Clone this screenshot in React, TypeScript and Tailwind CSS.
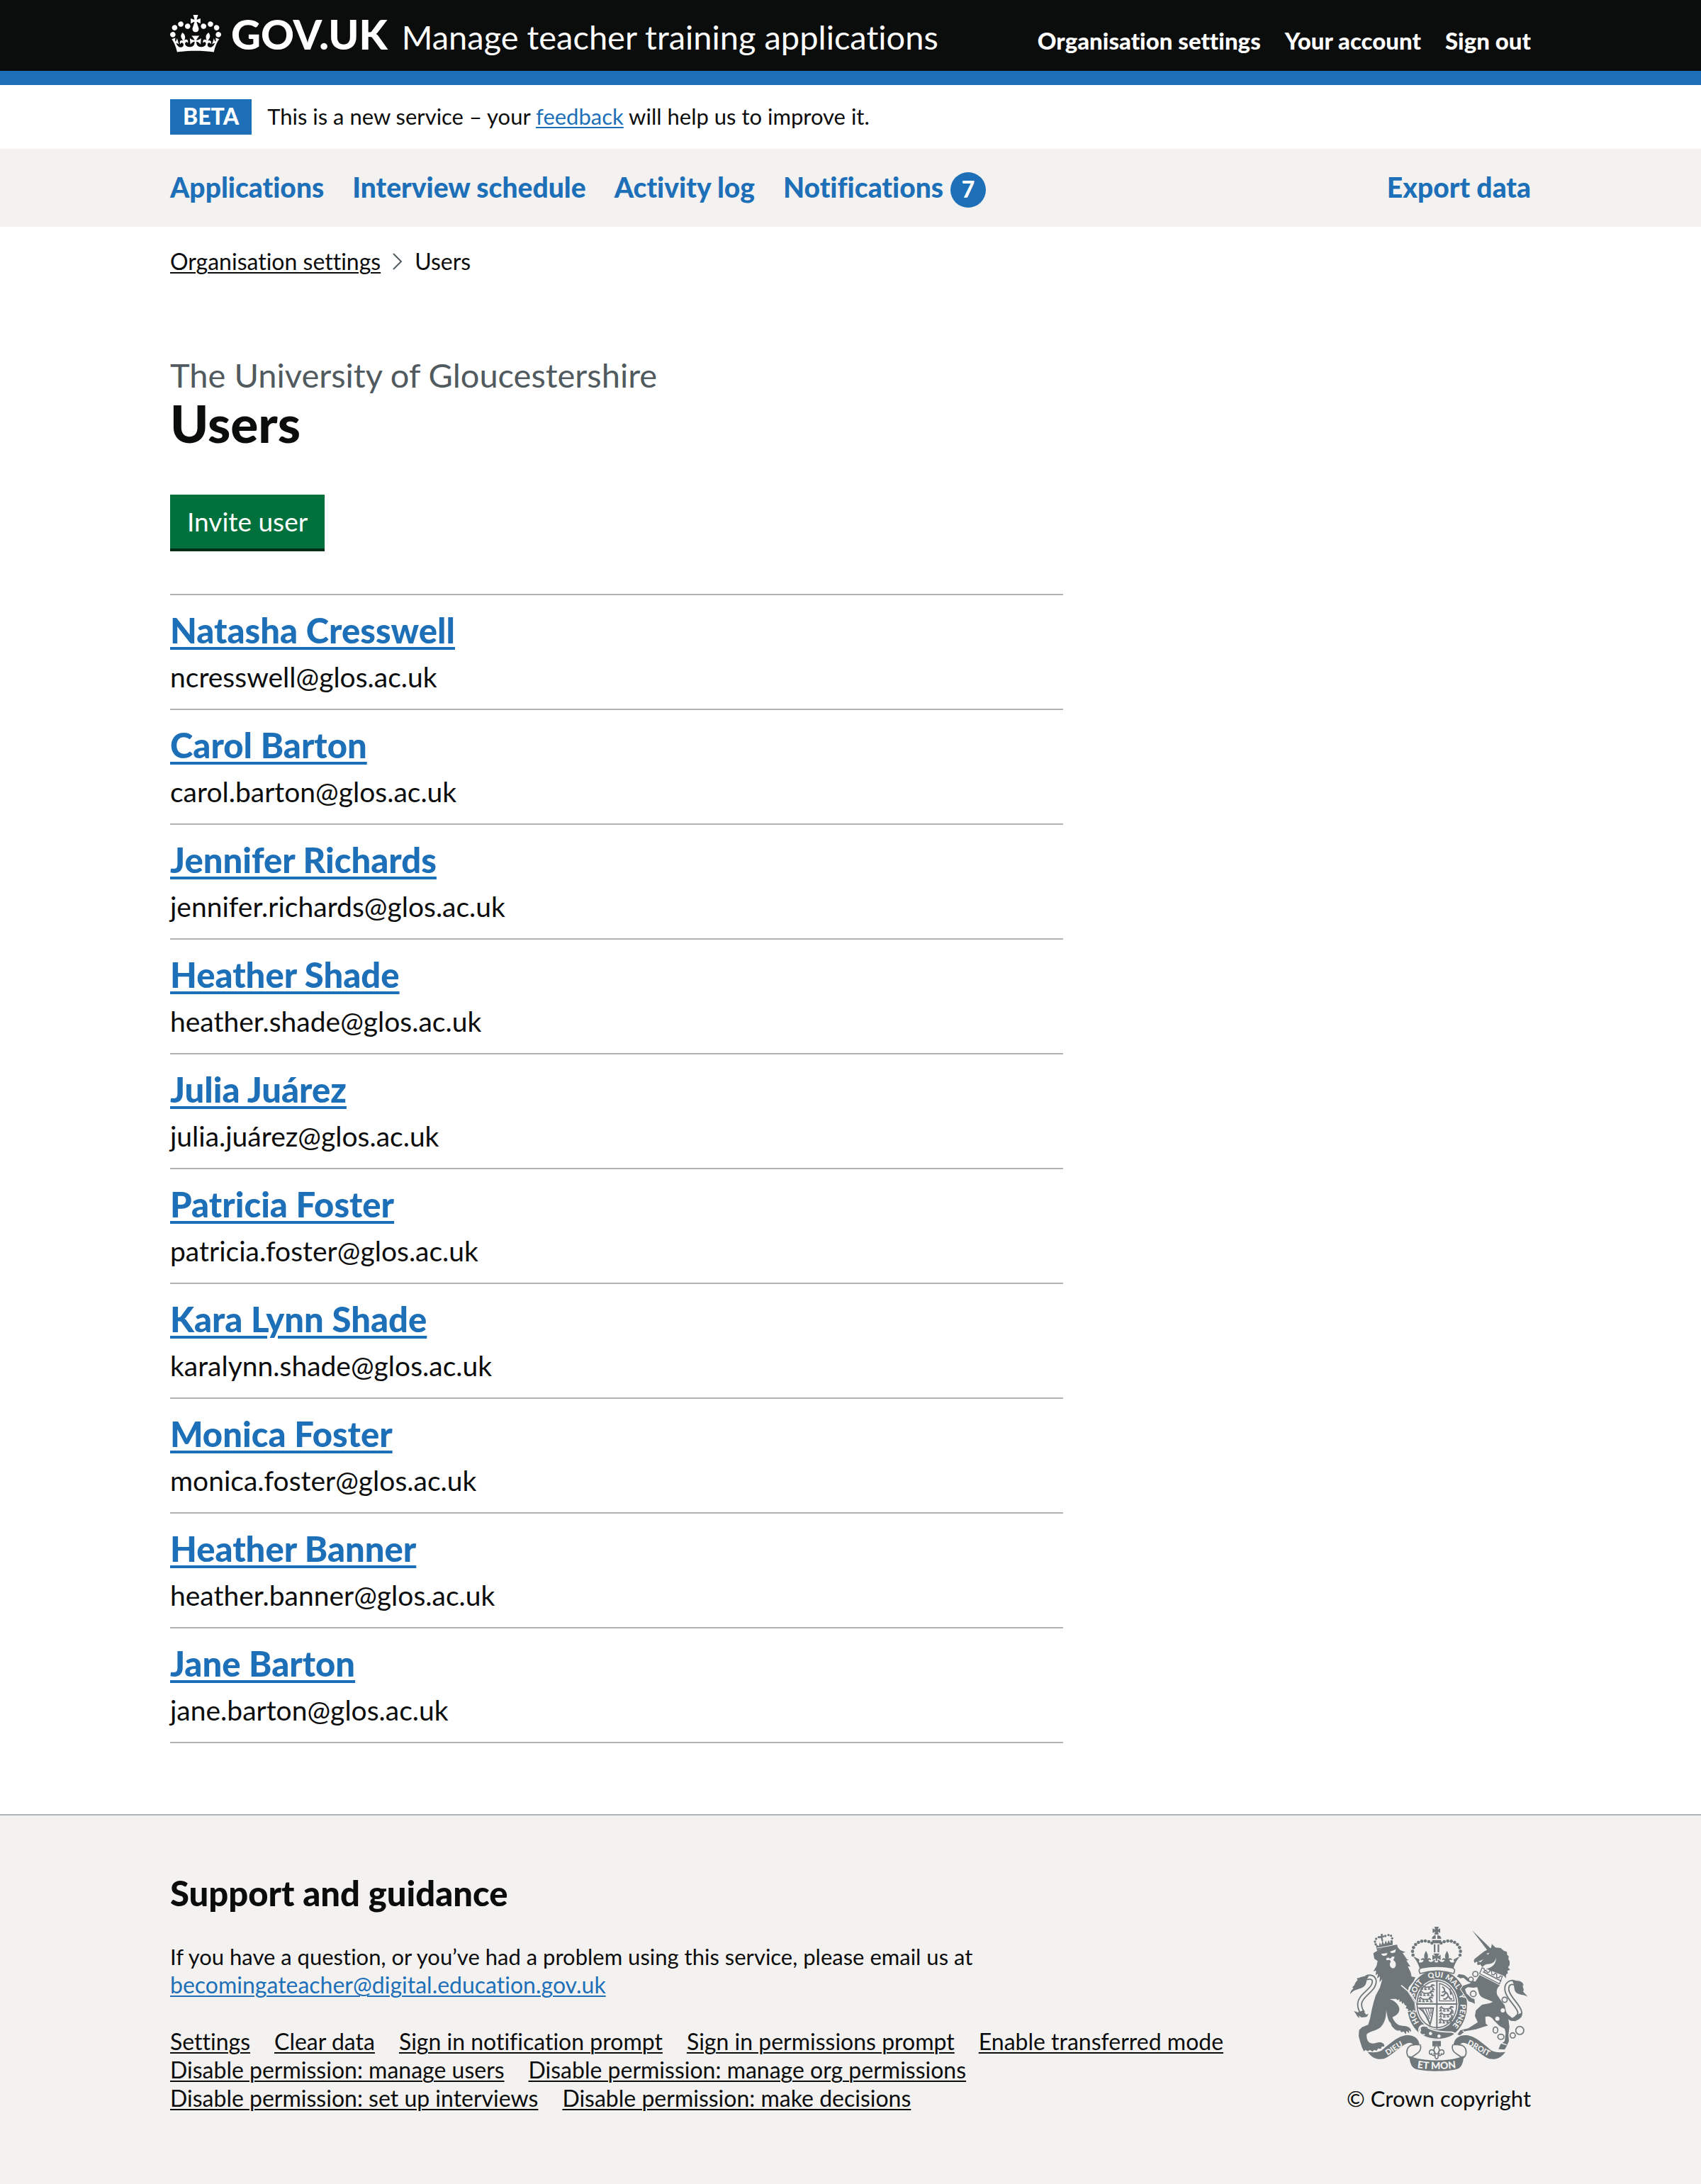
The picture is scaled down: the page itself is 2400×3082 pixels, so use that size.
import type { ReactNode } from 'react';

const users = [
  { name: 'Natasha Cresswell', email: 'ncresswell@glos.ac.uk' },
  { name: 'Carol Barton', email: 'carol.barton@glos.ac.uk' },
  { name: 'Jennifer Richards', email: 'jennifer.richards@glos.ac.uk' },
  { name: 'Heather Shade', email: 'heather.shade@glos.ac.uk' },
  { name: 'Julia Juárez', email: 'julia.juárez@glos.ac.uk' },
  { name: 'Patricia Foster', email: 'patricia.foster@glos.ac.uk' },
  { name: 'Kara Lynn Shade', email: 'karalynn.shade@glos.ac.uk' },
  { name: 'Monica Foster', email: 'monica.foster@glos.ac.uk' },
  { name: 'Heather Banner', email: 'heather.banner@glos.ac.uk' },
  { name: 'Jane Barton', email: 'jane.barton@glos.ac.uk' },
];

const accountLinks = ['Organisation settings', 'Your account', 'Sign out'];

const footerLinks = [
  'Settings',
  'Clear data',
  'Sign in notification prompt',
  'Sign in permissions prompt',
  'Enable transferred mode',
  'Disable permission: manage users',
  'Disable permission: manage org permissions',
  'Disable permission: set up interviews',
  'Disable permission: make decisions',
];

function Container({ className = '', children }: { className?: string; children: ReactNode }) {
  return <div className={`mx-auto w-full max-w-[1920px] ${className}`}>{children}</div>;
}

function CrownIcon() {
  return (
    <svg
      aria-hidden="true"
      className="mr-3.5 inline-block h-[53px] w-[72px] align-[-4px]"
      viewBox="0 0 132 97"
      fill="currentColor"
      fillRule="evenodd"
    >
      <path d="M25 30.2c3.5 1.5 7.7-.2 9.1-3.7 1.5-3.6-.2-7.8-3.9-9.2-3.6-1.4-7.6.3-9.1 3.9-1.4 3.5.3 7.5 3.9 9zM9 39.5c3.6 1.5 7.8-.2 9.2-3.7 1.5-3.6-.2-7.8-3.9-9.1-3.6-1.5-7.6.2-9.1 3.8-1.4 3.5.3 7.5 3.8 9zM4.4 57.2c3.5 1.5 7.7-.2 9.1-3.8 1.5-3.6-.2-7.7-3.9-9.1-3.5-1.5-7.6.3-9.1 3.8-1.4 3.5.3 7.6 3.9 9.1zm38.3-21.4c3.5 1.5 7.7-.2 9.1-3.8 1.5-3.6-.2-7.7-3.9-9.1-3.6-1.5-7.6.3-9.1 3.8-1.3 3.6.4 7.7 3.9 9.1zm64.4-5.6c-3.6 1.5-7.8-.2-9.1-3.7-1.5-3.6.2-7.8 3.8-9.2 3.6-1.4 7.7.3 9.2 3.9 1.3 3.5-.4 7.5-3.9 9zm15.9 9.3c-3.6 1.5-7.7-.2-9.1-3.7-1.5-3.6.2-7.8 3.7-9.1 3.6-1.5 7.7.2 9.2 3.8 1.5 3.5-.3 7.5-3.8 9zm4.7 17.7c-3.6 1.5-7.8-.2-9.2-3.8-1.5-3.6.2-7.7 3.9-9.1 3.6-1.5 7.7.3 9.2 3.8 1.3 3.5-.4 7.6-3.9 9.1zM89.3 35.8c-3.6 1.5-7.8-.2-9.2-3.8-1.4-3.6.2-7.7 3.9-9.1 3.6-1.5 7.7.3 9.2 3.8 1.4 3.6-.3 7.7-3.9 9.1zM69.7 17.7l8.9 4.7V9.3l-8.9 2.8c-.2-.3-.5-.6-.9-.9L72.4 0H59.6l3.5 11.2c-.3.3-.6.5-.9.9l-8.8-2.8v13.1l8.8-4.7c.3.3.6.7.9.9l-5 15.4v.1c-.2.8-.4 1.6-.4 2.4 0 4.1 3.1 7.5 7 8.1h.2c.3 0 .7.1 1 .1.4 0 .7 0 1-.1h.2c4-.6 7.1-4.1 7.1-8.1 0-.8-.1-1.7-.4-2.4V34l-5.1-15.4c.4-.2.7-.6 1-.9zM66 92.8c16.9 0 32.8 1.1 47.1 3.2 4-16.9 8.9-26.7 14-33.5l-9.6-3.4c1 4.9 1.1 7.2 0 10.2-1.5-1.4-3-4.3-4.2-8.7L108.6 76c2.8-2 5-3.2 7.5-3.3-4.4 9.4-10 11.9-13.6 11.2-4.3-.8-6.3-4.6-5.6-7.9 1-4.7 5.7-5.9 8-.5 4.3-8.7-3-11.4-7.6-8.8 7.1-7.2 7.9-13.5 2.1-21.1-8 6.1-8.1 12.3-4.5 20.8-4.7-5.4-12.1-2.5-9.5 6.2 3.4-5.2 7.9-2 7.2 3.1-.6 4.3-6.4 7.8-13.5 7.2-10.3-.9-10.9-8-11.2-13.8 2.5-.5 7.1 1.8 11 7.3L80.2 60c-4.1 4.4-8 5.3-12.3 5.4 1.4-4.4 8-11.6 8-11.6H55.5s6.4 7.2 7.9 11.6c-4.2-.1-8-1-12.3-5.4l1.4 16.4c3.9-5.5 8.5-7.7 10.9-7.3-.3 5.8-.9 12.8-11.1 13.8-7.2.6-12.9-2.9-13.5-7.2-.7-5 3.8-8.3 7.1-3.1 2.7-8.7-4.6-11.6-9.4-6.2 3.7-8.5 3.6-14.7-4.6-20.8-5.8 7.6-5 13.9 2.2 21.1-4.7-2.6-11.9.1-7.7 8.8 2.3-5.5 7.1-4.2 8.1.5.7 3.3-1.3 7.1-5.7 7.9-3.5.7-9-1.8-13.5-11.2 2.5.1 4.7 1.3 7.5 3.3l-4.7-15.4c-1.2 4.4-2.7 7.2-4.3 8.7-1.1-3-.9-5.3 0-10.2l-9.5 3.4c5 6.9 9.9 16.7 14 33.5 14.8-2.1 30.8-3.2 47.7-3.2z" />
    </svg>
  );
}

const INK = '#6f777b';
const PAPER = '#f3f2f1';

/* Beads of the left arch of the royal crown; the right arch mirrors them. */
const crownBeads = [
  [398, 204], [396, 188], [400, 172], [409, 159], [421, 150], [435, 145], [450, 144], [465, 147], [478, 153],
];

const lionCrownBeads = [
  [240, 158], [237, 147], [242, 135], [253, 128], [281, 123], [294, 119], [305, 122], [310, 133], [307, 145],
];

function PassantLion({ x, y }: { x: number; y: number }) {
  return (
    <path
      transform={`translate(${x} ${y})`}
      d="M0 8l8-7 6 6 10 3 18-2 12-7 6 3M8 8l-6 10h9M20 10l-2 9h8M38 9l-4 9h8M46 8l8 6-4 6h10M44 6l4-6 10 1"
      fill="none"
      stroke={INK}
      strokeWidth="5"
    />
  );
}

function HalfCrown() {
  return (
    <g>
      {crownBeads.map(([cx, cy]) => (
        <circle key={`${cx}-${cy}`} cx={cx} cy={cy} r="7" />
      ))}
      <path d="M405 212l20 10-2 12c10 4 18 0 20-8-6-6-8 2-12-2 2-8 12-10 16-4-2-10-4-16 6-34 10 18 10 24 6 34 6-6 14-4 16 4-4 4-8-4-12 2 4 10 20 10 24-4l-6 2v-16l8 6 9 2v52c-28 0-50 2-68 6l-6-20c-6-18-14-32-24-42z" />
    </g>
  );
}

function HalfRibbon() {
  return (
    <g>
      <path d="M206 614c19 26 40 34 69 29 35-13 65-53 100-66 12-4 20 0 25 9h26c-3-28-22-44-54-43-42 2-82 47-110 67-17 7-36 6-56 4z" />
      <path
        d="M404 584c-22 0-33 14-32 32 1 16 10 24 22 26M428 582c10 26-8 36-36 54"
        fill="none"
        stroke={INK}
        strokeWidth="5"
      />
    </g>
  );
}

function RoyalArms() {
  return (
    <svg aria-hidden="true" className="h-[204px] w-[250px]" viewBox="132 84 750 612" fill={INK}>
      <defs>
        <path id="garter-line" d="M500 530A99 116 0 0 1 500 298A99 116 0 0 1 500 530" />
        <path id="dieu-line" d="M268 640C306 626 336 592 380 578" />
        <path id="droit-line" d="M604 579C648 584 684 622 738 640" />
        <path id="et-mon-line" d="M400 678C450 690 545 690 596 678" />
      </defs>

      {/* Royal crown */}
      <HalfCrown />
      <g transform="translate(995 0) scale(-1 1)">
        <HalfCrown />
      </g>
      <path d="M488 84h19l-4 12 10-5v19l-10-5 4 12h-19l4-12-11 5V91l11 5z" />
      <path d="M478 135a19 17 0 0 1 16-16v16zM501 119a19 17 0 0 1 17 16h-17zM478 140h40c-1 9-8 14-8 14h-24s-7-5-8-14zM486 158h7v34h-7zM502 158h7v34h-7z" />
      <path d="M482 196h31l-10 12 14-6v24l-16-8v14h-8v-14l-15 8v-24l14 6z" fill={PAPER} stroke={PAPER} strokeWidth="5" />
      <path d="M484 197h27l-9 12 13-6v22l-14-8v12h-7v-12l-14 8v-22l13 6z" />

      {/* Garter and shield */}
      <ellipse cx="500" cy="415" rx="131" ry="151" fill={PAPER} />
      <ellipse cx="500" cy="415" rx="127" ry="148" />
      <path d="M428 282c-8-14-4-22 8-24 40-8 86-8 126 0 12 2 16 10 8 24-46-14-96-14-142 0z" fill={PAPER} stroke={INK} strokeWidth="5" />
      <ellipse cx="499" cy="412" rx="91" ry="106" fill={PAPER} />
      <ellipse cx="499" cy="412" rx="84" ry="99" fill="none" stroke={INK} strokeWidth="5" />
      <path d="M496 310h6v206h-6zM412 408h174v6h-174z" />
      <PassantLion x={430} y={330} />
      <PassantLion x={426} y={356} />
      <PassantLion x={422} y={382} />
      <PassantLion x={510} y={422} />
      <PassantLion x={510} y={447} />
      <PassantLion x={508} y={472} />
      <path d="M510 324v74h62c-2-34-24-64-62-74z" fill="none" stroke={INK} strokeWidth="4" />
      <path
        d="M522 338l8 8 2 12 12 10 4 14M532 358l-12 4M536 364l-10 12-10-2M546 380l-10 10-10 0M548 378l8 12 8 0M556 372c8-8-6-16 0-26"
        fill="none"
        stroke={INK}
        strokeWidth="6"
      />
      <path d="M424 428h60c-4 26-6 46-14 70-8-26-24-54-46-70z" fill="none" stroke={INK} strokeWidth="6" />
      <path d="M438 430l24 52M450 430l18 44M462 430l10 34M474 430v22" stroke={INK} strokeWidth="4" />
      <g fontFamily="Lato, sans-serif" fontWeight="900" fontSize="32" fill={PAPER} textAnchor="middle">
        <text><textPath href="#garter-line" startOffset="17%">HO</textPath></text>
        <text><textPath href="#garter-line" startOffset="35%">SOIT</textPath></text>
        <text><textPath href="#garter-line" startOffset="49%">QUI</textPath></text>
        <text><textPath href="#garter-line" startOffset="60%">MAL</textPath></text>
        <text><textPath href="#garter-line" startOffset="70%">Y</textPath></text>
        <text><textPath href="#garter-line" startOffset="82%">PENSE</textPath></text>
      </g>

      {/* Buckle */}
      <path d="M424 512c10-18 34-14 38 0 30 16 66 18 100 18l16 6c-30 28-96 34-142 8-12-6-16-18-12-32z" stroke={PAPER} strokeWidth="5" />
      <path d="M456 506c-20-6-34 4-26 16-8 10 2 24 18 18" fill="none" stroke={PAPER} strokeWidth="5" />
      <circle cx="472" cy="536" r="7" fill={PAPER} />
      <circle cx="508" cy="547" r="7" fill={PAPER} />

      {/* Lion */}
      <g transform="translate(120 66)">
        <path
          stroke={PAPER}
          strokeWidth="6"
          paintOrder="stroke"
          d="M110 130l20-12 22-12 58-14 4 14 10 11 22 8-12 4 18 26 8 3-10 3 17 26-11-2 12 26 4 18 16 3-8 18-20 24-4 20 14 22 14 24 4 36-9-6-5 12-7-10-10 4v-10l-10-3 4-10-9-5-3-9-7 6-3-12-8 4-1-12-8 4-5-6-28 1c20 6 38 22 41 40 2 20-14 30-29 37 4 14 18 30 31 34 14 4 26 2 38 8 9 6 12 15 8 20l-8-8 2 14-12-10-2 14-10-12-10 4-4-8c-12 2-20-2-26-8l-10-10-4-12-8-10-6-18-6-30c2 30-6 60-28 78-18 12-42 14-54 26-2 16 4 34 18 38 14 6 34-12 50 0 6 4 8 10 6 14l-10 0-4 10-12-2-6 10-10-4-8 8-10-8-10 6-8-6-8 6-8-16-8-26-6-22 2-26 12-12 26-10 8-26 8-40 8-32 8-26 18-34 10-36-12 14 2-26-12 10 4-20-10 6 2-20-12 4 14-24 4-20-14-10z"
        />
        <path d="M142 133l28-4-4 10-14 3zM180 124l26-11-4 14-14 3zM164 152l10-4 4 4 8-2 2-5 12-1-2 8-4 6 4 4c12 8 8 32-4 32-14 0-18-18-10-28l-4-8-14 2z" fill={PAPER} />
        <path d="M112 116c24-14 60-22 98-24" fill="none" stroke={PAPER} strokeWidth="4" />
        <path d="M228 266l38 32 24 38" fill="none" stroke={PAPER} strokeWidth="5" />
        <path d="M80 234c30-10 42 10 28 36-14 24-54 44-56 74 0 18 6 30 14 40" fill="none" stroke={INK} strokeWidth="22" />
        <path d="M80 234c30-10 42 10 28 36-14 24-54 44-56 74 0 18 6 30 14 42" fill="none" stroke={PAPER} strokeWidth="11" />
        <path d="M92 226c-24-2-36 8-52 10l4 8c-14 10-10 24-24 30l6 4c-8 8-14 14-14 26 20-28 50-18 64-40 8-12 2-20 16-38zM28 374l16 6 22-8 14 18 10-4-8 14-22 2-12-8 4 10c-12-4-12-14-18-20z" />
      </g>
      {lionCrownBeads.map(([cx, cy]) => (
        <circle key={`${cx}-${cy}`} cx={cx} cy={cy} r="5" />
      ))}
      <path d="M246 186l-6-28 14 8 3-16 7 12 5-18 7 16 7-18 5 14 7-16 5 12 12-10v26c-24 0-46 4-66 18zM262 114h8l-1 8 6-2 1 8-7 1 3 16-6 2-4-16-6 2-1-8 7-2z" />
      <path d="M246 174l66-12" stroke={PAPER} strokeWidth="3" />

      {/* Unicorn */}
      <g transform="translate(600 66)">
        <path d="M48 33l80 78-14 8zM128 108l4-17 15 15 22 2 14 12 12 4 2 14 6 4-1 14 5 8v16l-7 10 9 10-11 4 1 12-7 4-1 16-8-10-86-34c-8-6-12-10-14-16l-6 4-8-2 2-10-4-2-8 6-4-10 4-8 40-32z" />
        <path d="M108 132l14-4-6 8zM150 148c-4 20-18 28-36 28-14 0-24 14-30 24l18-2c24-4 48-16 48-50zM74 166l22-10-12 12z" fill={PAPER} />
        <path
          stroke={PAPER}
          strokeWidth="6"
          paintOrder="stroke"
          d="M80 222l86 44c-14 10-16 26-12 40l16 24 16 20 8 36 8 24 4 32-4 34 2 26-10 22-8 14-26-2 8-20 18-14 4-34-4-18-22-12-24-24c-10-16-26-20-36-14l2 28 10 8-52 16-44 8-24 18-10-4 12-18 34-8 40-26-12-26 4-24 26-24 32-6 14-6-28-12c-16-4-30-14-32-30l-6-20-16 2-24-2-12 8 6 18 22 20 12 4 2 20-12-6-14-4-14-22-20-30 10-14 34-12-16-8-16-14-14 2-14-8 8-10 22 4 14 10 8 12 26 6z"
        />
        <path d="M90 192l8 2 4 12 4-4 8 10 6-2 4-8 6 4 2 14 8 2 6-8 6 4v14l10 2 6-8 8 2-12 32-84-44z" fill={PAPER} stroke={INK} strokeWidth="4" />
        <path d="M94 208l78 40" stroke={INK} strokeWidth="5" />
        <path d="M238 262c-24-18-48-4-42 28 8 34 50 62 54 90 1 10-4 20-16 24" fill="none" stroke={INK} strokeWidth="22" />
        <path d="M238 262c-24-18-48-4-42 28 8 34 50 62 54 90 1 10-4 20-20 24" fill="none" stroke={PAPER} strokeWidth="11" />
        <path d="M218 248c30-6 46 4 48 18l-4 0c2 12 6 18 4 22l-2 4c6 10 12 10 18 22-16-10-32-6-46-16-14-12-6-34-18-50zM182 364l16 24 20 16 22-14 18-8-4 14 4 4-20 8-4 10-22-2-16-10-14-20z" />
        <path d="M8 458l14 10M170 510l24 8" stroke={PAPER} strokeWidth="4" />
        <g fill={PAPER} stroke={INK} strokeWidth="5">
          <circle cx="62" cy="218" r="11" />
          <circle cx="43" cy="241" r="10" />
          <circle cx="53" cy="302" r="12" />
          <circle cx="186" cy="327" r="11" />
          <ellipse cx="147" cy="455" rx="10" ry="13" />
          <ellipse cx="170" cy="484" rx="13" ry="11" />
          <circle cx="220" cy="478" r="11" />
          <circle cx="250" cy="457" r="17" />
        </g>
        <circle cx="178" cy="372" r="9" fill={PAPER} />
        <circle cx="155" cy="407" r="9" fill={PAPER} />
      </g>

      {/* Fleur-de-lis */}
      <path d="M480 568h36v22h-10l-8-10-8 10h-10z" />
      <path
        d="M498 584c-14 14-14 24-6 38-2-18-22-24-25-8-1 10 6 12 10 8 2 8 10 8 14 6 0 20 14 20 14 0 4 2 12 2 14-6 4 4 11 2 10-8-3-16-23-10-25 8 8-14 8-24-6-38zM484 622h28"
        fill="none"
        stroke={INK}
        strokeWidth="5"
      />

      {/* Motto ribbon */}
      <HalfRibbon />
      <g transform="translate(995 0) scale(-1 1)">
        <HalfRibbon />
      </g>
      <path d="M382 630c50 26 180 26 231 0-2 28-8 45-22 54-40 15-147 15-187 0-14-9-20-26-22-54z" />
      <g fontFamily="Lato, sans-serif" fontWeight="900" fill={PAPER} textAnchor="middle">
        <text fontSize="33"><textPath href="#dieu-line" startOffset="50%">DIEU</textPath></text>
        <text fontSize="33"><textPath href="#droit-line" startOffset="50%">DROIT</textPath></text>
        <text fontSize="42"><textPath href="#et-mon-line" startOffset="50%">ET MON</textPath></text>
      </g>
    </svg>
  );
}

const navLink = 'flex items-start text-[39px] leading-[42px] font-black text-[#1d70b8]';

export default function App() {
  return (
    <div className="bg-white font-[Lato,sans-serif] text-[#0b0c0c] [font-variant-ligatures:none]">
      <header className="border-b-[20px] border-[#1d70b8] bg-[#0b0c0c] text-white">
        <Container className="flex h-[100px] items-baseline justify-between pt-[18px]">
          <div className="flex items-baseline gap-5">
            <a href="#" className="text-[58px] leading-[60px] font-black whitespace-nowrap">
              <CrownIcon />
              GOV.UK
            </a>
            <a href="#" className="text-[47px] leading-[60px] whitespace-nowrap">
              Manage teacher training applications
            </a>
          </div>
          <nav aria-label="Account" className="flex gap-[34px] text-[33px] font-black whitespace-nowrap">
            {accountLinks.map((label) => (
              <a key={label} href="#">{label}</a>
            ))}
          </nav>
        </Container>
      </header>

      <Container className="flex items-start gap-[22px] py-5 text-[31px] leading-[48px]">
        <strong className="bg-[#1d70b8] px-[18px] pb-0.5 text-[32px] font-black text-white">BETA</strong>
        <p>
          This is a new service – your{' '}
          <a href="#" className="text-[#1d70b8] underline decoration-2 underline-offset-[3px]">feedback</a> will help us to improve it.
        </p>
      </Container>

      <nav aria-label="Primary" className="bg-[#f3f2f1]">
        <Container className="flex items-start gap-10 pt-[33px] pb-[27px]">
          <a href="#" className={navLink}>Applications</a>
          <a href="#" className={navLink}>Interview schedule</a>
          <a href="#" className={navLink}>Activity log</a>
          <a href="#" className={navLink}>
            Notifications
            <span className="ml-2.5 size-[50px] rounded-full bg-[#1d70b8] text-center text-[32px] leading-[48px] text-white">7</span>
          </a>
          <a href="#" className={`${navLink} ml-auto`}>Export data</a>
        </Container>
      </nav>

      <main className="pb-[100px]">
        <Container>
          <nav aria-label="Breadcrumb" className="pt-[29px] text-[32px] leading-10">
            <ol className="flex items-center">
              <li><a href="#" className="underline decoration-2 underline-offset-[3px]">Organisation settings</a></li>
              <li className="flex items-center">
                <svg aria-hidden="true" className="mx-4 h-6 w-4" viewBox="0 0 16 24" fill="none" stroke="#505a5f" strokeWidth="2">
                  <path d="M2 1l11 11L2 23" />
                </svg>
                Users
              </li>
            </ol>
          </nav>

          <p className="mt-28 text-[47px] leading-[56px] text-[#505a5f]">The University of Gloucestershire</p>
          <h1 className="text-[73px] leading-[80px] font-black">Users</h1>

          <button type="button" className="mt-[61px] block h-[76px] bg-[#00703c] px-6 text-[37px] text-white shadow-[0_4px_0_#002d18]">
            Invite user
          </button>

          <div className="mt-16 grid grid-cols-3 gap-[60px]">
            <ul className="col-span-2 border-t-2 border-[#b1b4b6]">
              {users.map((user) => (
                <li key={user.email} className="border-b-2 border-[#b1b4b6] pt-[18px] pb-5">
                  <h2 className="text-[49px] leading-[62px] font-black">
                    <a href="#" className="text-[#1d70b8] underline decoration-4 underline-offset-[5px]">{user.name}</a>
                  </h2>
                  <p className="mt-2.5 text-[39px] leading-[50px]">{user.email}</p>
                </li>
              ))}
            </ul>
          </div>
        </Container>
      </main>

      <footer className="border-t-2 border-[#b1b4b6] bg-[#f3f2f1] pt-[79px] pb-[101px]">
        <Container className="flex items-end gap-[60px] text-[32px] leading-10">
          <div className="min-w-0 flex-1">
            <h2 className="text-[49px] leading-[60px] font-black">Support and guidance</h2>
            <p className="mt-10 text-[31px]">
              If you have a question, or you’ve had a problem using this service, please email us at
              <br />
              <a href="#" className="text-[32px] text-[#1d70b8] underline decoration-2 underline-offset-[3px]">becomingateacher@digital.education.gov.uk</a>
            </p>
            <ul className="mt-10 flex flex-wrap gap-x-[34px]">
              {footerLinks.map((label) => (
                <li key={label}><a href="#" className="underline decoration-2 underline-offset-[3px]">{label}</a></li>
              ))}
            </ul>
          </div>
          <a href="#" className="flex shrink-0 flex-col items-center gap-[18px] text-[31px]">
            <RoyalArms />
            © Crown copyright
          </a>
        </Container>
      </footer>
    </div>
  );
}
